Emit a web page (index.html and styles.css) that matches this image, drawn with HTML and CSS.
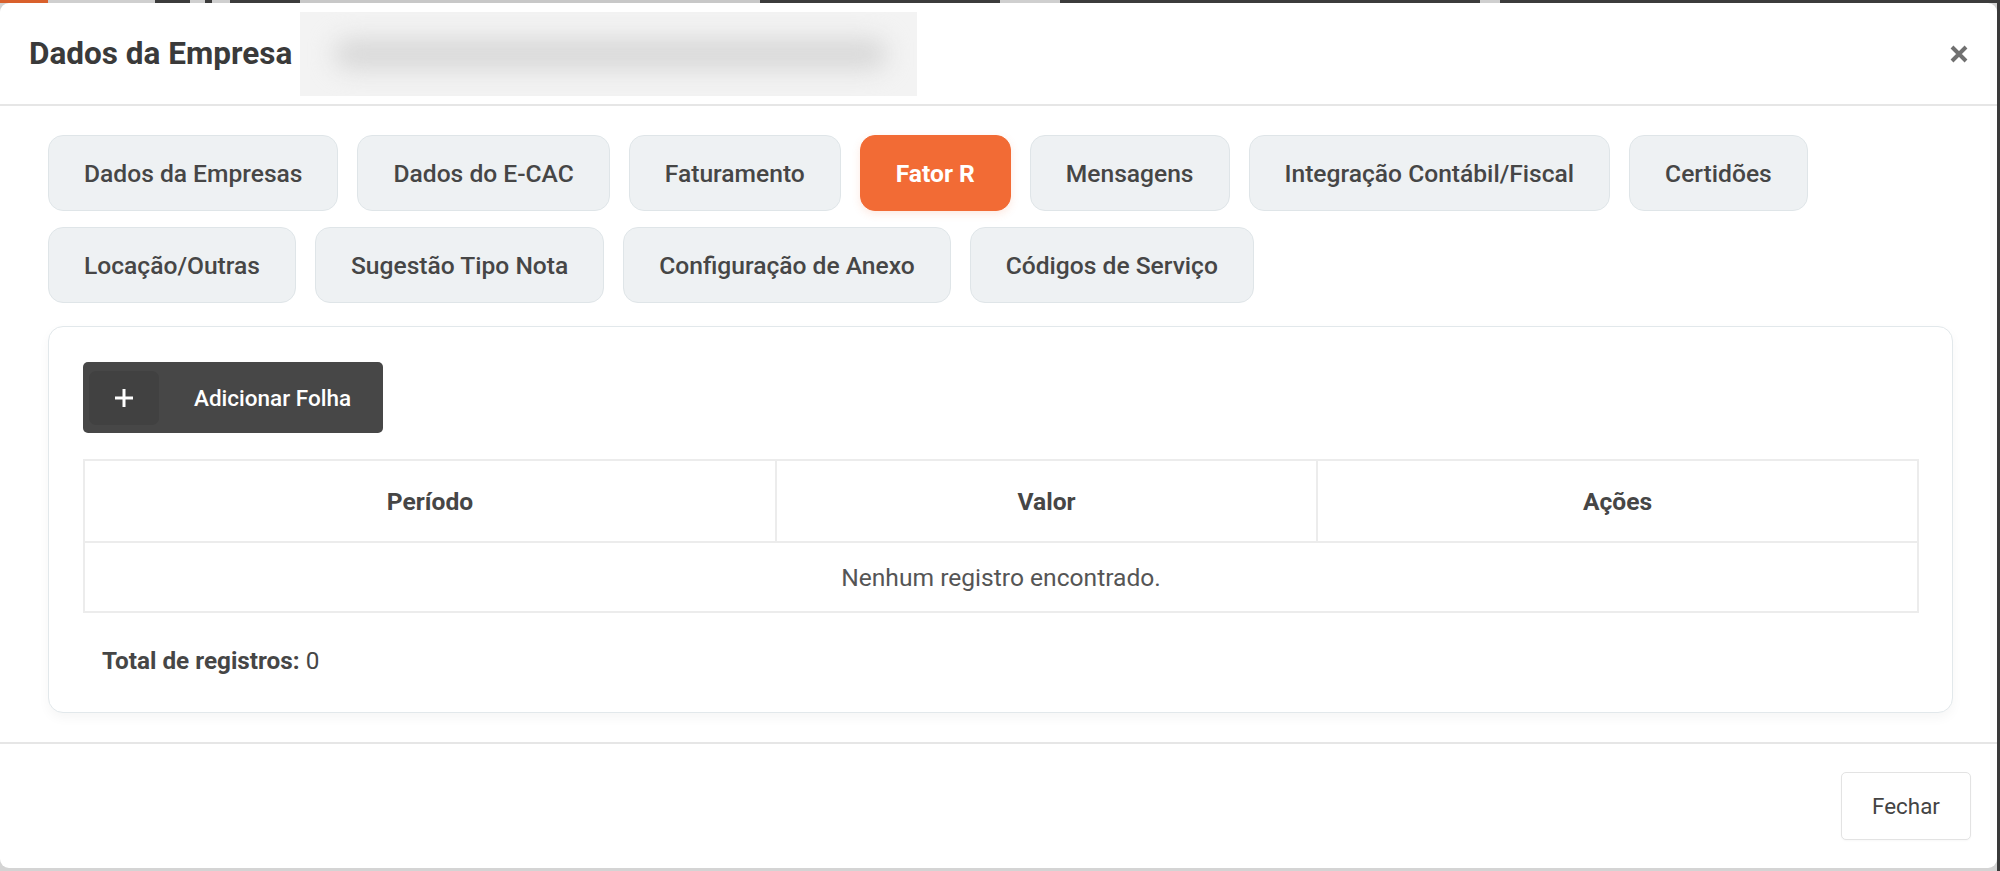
FILE: index.html
```html
<!DOCTYPE html>
<html lang="pt-BR">
<head>
<meta charset="utf-8">
<title>Dados da Empresa</title>
<link rel="stylesheet" href="styles.css">
</head>
<body>
<div class="modal">
  <header class="modal-header">
    <h1 class="modal-title">Dados da Empresa</h1>
    <div class="redact"><div class="redact-blur"></div></div>
    <button class="close" aria-label="Fechar">
      <svg width="20" height="20" viewBox="0 0 20 20"><path d="M3 3 L17 17 M17 3 L3 17" stroke="#707070" stroke-width="4" stroke-linecap="butt" fill="none"/></svg>
    </button>
  </header>
  <main class="modal-body">
    <nav class="tabs">
      <a class="tab">Dados da Empresas</a>
      <a class="tab">Dados do E-CAC</a>
      <a class="tab">Faturamento</a>
      <a class="tab active">Fator R</a>
      <a class="tab">Mensagens</a>
      <a class="tab">Integração Contábil/Fiscal</a>
      <a class="tab">Certidões</a>
      <a class="tab">Locação/Outras</a>
      <a class="tab">Sugestão Tipo Nota</a>
      <a class="tab">Configuração de Anexo</a>
      <a class="tab">Códigos de Serviço</a>
    </nav>
    <section class="card">
      <button class="btn-add">
        <span class="btn-icon">
          <svg width="20" height="20" viewBox="0 0 20 20"><path d="M10 1 V19 M1 10 H19" stroke="#fff" stroke-width="3" fill="none"/></svg>
        </span>
        <span class="btn-label">Adicionar Folha</span>
      </button>
      <table class="grid">
        <colgroup>
          <col class="c1"><col class="c2"><col class="c3">
        </colgroup>
        <thead>
          <tr><th>Período</th><th>Valor</th><th>Ações</th></tr>
        </thead>
        <tbody>
          <tr><td colspan="3" class="empty">Nenhum registro encontrado.</td></tr>
        </tbody>
      </table>
      <p class="total"><strong>Total de registros:</strong> 0</p>
    </section>
  </main>
  <footer class="modal-footer">
    <button class="btn-close">Fechar</button>
  </footer>
</div>
</body>
</html>
```
FILE: styles.css
```css
* { box-sizing: border-box; }
html, body { margin: 0; padding: 0; }
body {
  width: 2000px;
  height: 871px;
  overflow: hidden;
  padding-top: 3px;
  font-family: Roboto, "Liberation Sans", sans-serif;
  background:
    linear-gradient(to right, #d9602c 0 48px, #cfcfcf 48px 155px, #3c3c3c 155px 190px, #cfcfcf 190px 205px, #3c3c3c 205px 212px, #cfcfcf 212px 230px, #3c3c3c 230px 300px, #c8c8c8 300px 760px, #3c3c3c 760px 1000px, #cfcfcf 1000px 1060px, #3c3c3c 1060px 1480px, #cfcfcf 1480px 1500px, #3c3c3c 1500px 2000px) top left / 100% 3px no-repeat,
    linear-gradient(#3a3a3a, #3a3a3a) right top / 3px 100% no-repeat,
    #d4d4d4;
}
.modal {
  width: 1997px;
  height: 865px;
  background: #fff;
  border-radius: 9px;
  display: flex;
  flex-direction: column;
  overflow: hidden;
}
.modal-header {
  height: 103px;
  flex: none;
  display: flex;
  align-items: center;
  padding: 0 28px 0 29px;
  border-bottom: 2px solid #e6e6e6;
}
.modal-title {
  margin: 0;
  font-size: 31.5px;
  font-weight: 700;
  color: #3a3a3a;
  letter-spacing: 0;
}
.redact {
  width: 617px;
  height: 84px;
  margin-left: 8px;
  background: #f3f3f3;
  overflow: hidden;
  display: flex;
  align-items: center;
}
.redact-blur {
  flex: 1;
  height: 30px;
  margin: 0 30px 0 34px;
  background: #d7d7d7;
  border-radius: 15px;
  filter: blur(12px);
}
.close {
  margin-left: auto;
  border: 0;
  background: none;
  padding: 0;
  width: 20px;
  height: 20px;
  display: flex;
}
.modal-body {
  flex: 1;
  padding: 29px 44px 29px 48px;
}
.tabs {
  display: flex;
  flex-wrap: wrap;
  gap: 16px 19px;
}
.tab {
  height: 76px;
  display: flex;
  align-items: center;
  padding: 0 35px;
  background: #eef1f3;
  border: 1px solid #dfe5e8;
  border-radius: 15px;
  font-size: 24.6px;
  font-weight: 500;
  color: #464646;
}
.tab.active {
  background: #f26b35;
  border-color: #f26b35;
  color: #fff;
  font-weight: 700;
  box-shadow: 0 3px 8px rgba(242, 107, 53, 0.15);
}
.card {
  margin-top: 23px;
  height: 387px;
  border: 1px solid #e2e8eb;
  border-radius: 15px;
  background: #fff;
  padding: 35px 35px 35px 34px;
  box-shadow: 0 5px 12px rgba(0, 0, 0, 0.04);
}
.btn-add {
  width: 300px;
  height: 71px;
  display: flex;
  align-items: center;
  padding: 0 28px 0 6px;
  background: #474747;
  border: 0;
  border-radius: 5px;
  font-family: inherit;
  cursor: pointer;
}
.btn-icon {
  width: 70px;
  height: 54px;
  border-radius: 7px;
  background: #414141;
  display: flex;
  align-items: center;
  justify-content: center;
  margin-right: 35px;
}
.btn-label {
  font-size: 22.5px;
  font-weight: 500;
  color: #fff;
  white-space: nowrap;
}
.grid {
  margin-top: 26px;
  width: 1834px;
  border-collapse: collapse;
  table-layout: fixed;
}
.c1 { width: 692px; }
.c2 { width: 541px; }
.c3 { width: 601px; }
.grid th, .grid td {
  border: 2px solid #ececec;
  font-size: 24.6px;
  text-align: center;
  color: #464646;
  padding: 0;
}
.grid th {
  height: 82px;
  font-weight: 700;
}
.grid th + th { border-left-width: 1px; }
.grid td {
  height: 70px;
  font-weight: 400;
  color: #555;
}
.total {
  margin: 30px 0 0 19px;
  font-size: 24.3px;
  line-height: 36px;
  color: #464646;
}
.total strong { font-weight: 700; }
.modal-footer {
  flex: none;
  height: 126px;
  border-top: 2px solid #e6e6e6;
  display: flex;
  justify-content: flex-end;
  align-items: center;
  padding: 0 26px;
}
.btn-close {
  width: 130px;
  height: 68px;
  background: #fff;
  border: 1px solid #e3e3e3;
  border-radius: 5px;
  font-family: inherit;
  font-size: 22.4px;
  color: #444;
  box-shadow: 0 1px 2px rgba(0, 0, 0, 0.03);
}
```
